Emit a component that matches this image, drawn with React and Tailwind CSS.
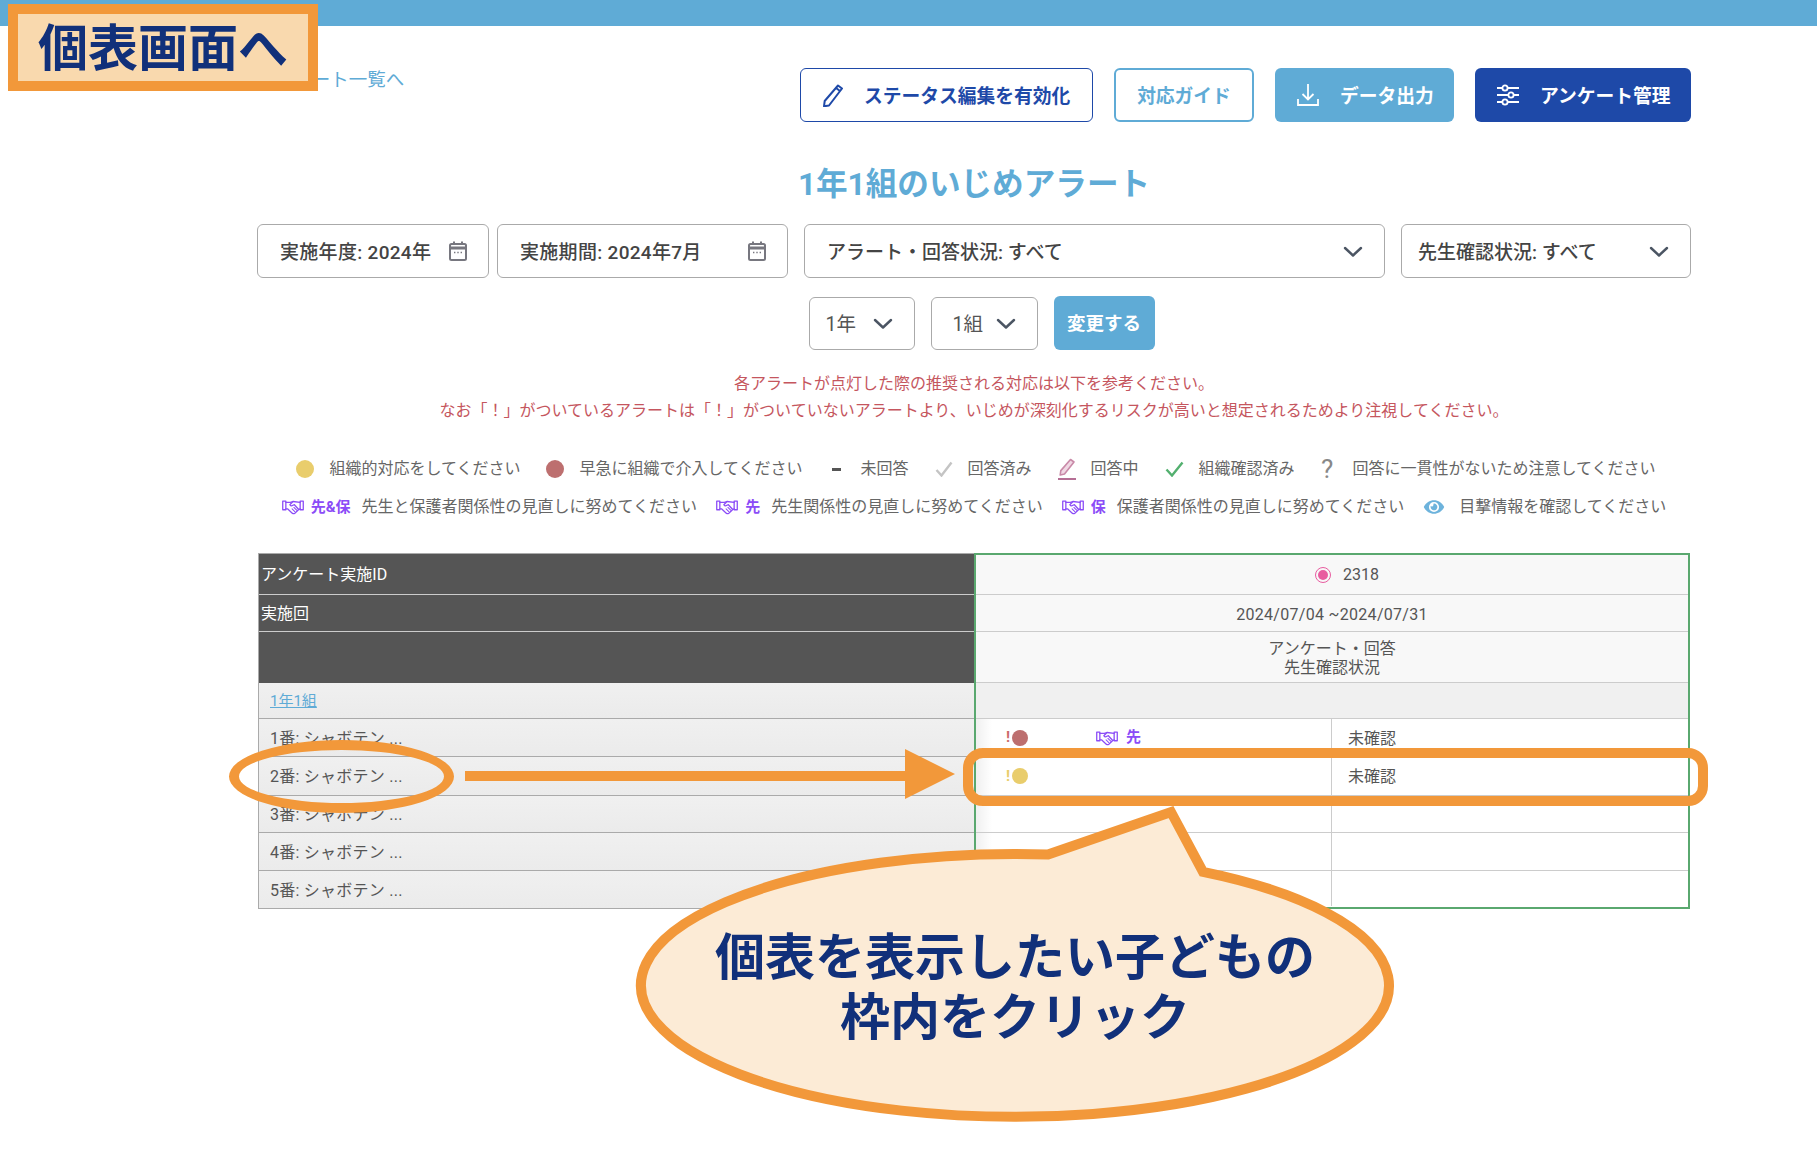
import React from "react";
import { FaEye } from "react-icons/fa";

const students = ["1番: シャボテン ...", "2番: シャボテン ...", "3番: シャボテン ...", "4番: シャボテン ...", "5番: シャボテン ..."];
const rowHeights = ["h-[38px]", "h-[39px]", "h-[37px]", "h-[38px]", "h-[37px]"];

function Chevron() {
  return (
    <svg viewBox="0 0 20 11" className="w-[20px] h-[11px] shrink-0" fill="none" stroke="#4b5563" strokeWidth="2.4" strokeLinecap="round" strokeLinejoin="round">
      <path d="M2 2l8 7.5L18 2" />
    </svg>
  );
}

function Calendar() {
  return (
    <svg viewBox="0 0 18 20" className="w-[18px] h-[20px] shrink-0" fill="none" stroke="#77777f" strokeWidth="2">
      <rect x="1" y="3" width="16" height="16" rx="1.5" />
      <path d="M1 7h16" strokeWidth="3" />
      <path d="M5 0.5v3M13 0.5v3" />
      <path d="M5 11.5h1.4M8.3 11.5h1.4M11.6 11.5h1.4" strokeWidth="1.5" />
    </svg>
  );
}

function Dot({ color, size = "w-[18px] h-[18px]" }) {
  return <span className={`${size} rounded-full shrink-0 ${color}`} />;
}

function Hands() {
  return (
    <svg viewBox="0 0 24 17" className="w-[22px] h-[16px] shrink-0" fill="none" stroke="#8b4cf7" strokeWidth="1.4" strokeLinejoin="round" strokeLinecap="round">
      <path d="M0.8 2h3.4v9.5H0.8zM19.8 2h3.4v9.5h-3.4z" />
      <path d="M4.2 3.5L9 3.5L12 2.5L19.8 3.5" />
      <path d="M4.2 10.5H6L11.5 15.5Q12.8 16.2 14 15.3L18 11.5L19.8 10.5" />
      <path d="M12 2.5L8.6 6Q9.6 8 12 6.6L13.5 6L18 11" />
      <path d="M11 10.5L14 13.5M13 9L16 12" strokeWidth="1.1" />
    </svg>
  );
}

function Legend({ icon, children, gap = "gap-[15px]" }) {
  return (
    <div className={`flex items-center ${gap}`}>
      {icon}
      <span className="whitespace-nowrap">{children}</span>
    </div>
  );
}

function Field({ width, children, right }) {
  return (
    <div className={`${width} h-[54px] border border-[#aaaaaa] rounded-md flex items-center justify-between pr-[21px] font-medium text-[19px] text-[#444444]`}>
      <span className="pt-[4px]">{children}</span>
      {right}
    </div>
  );
}

function ClassSelect({ label, box }) {
  return (
    <div className={`${box} h-[53px] border border-[#aaaaaa] rounded-md flex items-center justify-between pr-[21px] text-[19.5px] text-[#555555]`}>
      <span className="pt-[4px]">{label}</span>
      <Chevron />
    </div>
  );
}

export default function App() {
  return (
    <div className="relative w-full h-[1176px] overflow-hidden bg-white font-['Roboto','Noto_Sans_CJK_JP',sans-serif] text-[#555555]">
      <div className="h-[26px] bg-[#5fabd6]" />

      <div className="ml-[257px] w-[1434px]">
        <div className="flex justify-between items-start mt-[42px]">
          <a className="text-[18.5px] leading-[24px] text-[#5fabd6]">アンケート一覧へ</a>
          <div className="flex gap-[21px] text-[18.75px] font-bold">
            <button className="w-[293px] h-[54px] border-[1.5px] border-[#1e49a8] rounded-md flex items-center pl-[21px] gap-[20px] text-[#1e49a8]">
              <svg viewBox="0 0 22 24" className="w-[22px] h-[24px]" fill="none" stroke="#1e49a8" strokeWidth="2" strokeLinejoin="round">
                <path d="M16 2.5l4 3L7 22.5l-5 0.8 0.7-5.3z" />
                <path d="M14 5l4 3" />
              </svg>
              <span className="pt-[4px]">ステータス編集を有効化</span>
            </button>
            <button className="w-[140px] h-[54px] border-2 border-[#5fabd6] rounded-md text-[#5fabd6] pt-[4px]">対応ガイド</button>
            <button className="w-[179px] h-[54px] bg-[#5fabd6] rounded-md flex items-center pl-[22px] gap-[21px] text-white">
              <svg viewBox="0 0 22 24" className="w-[22px] h-[24px]" fill="none" stroke="#ffffff" strokeWidth="1.8">
                <path d="M11 1v15M5.5 11l5.5 5.5 5.5-5.5" />
                <path d="M1 16v6h20v-6" />
              </svg>
              <span className="pt-[4px]">データ出力</span>
            </button>
            <button className="w-[216px] h-[54px] bg-[#1e49a8] rounded-md flex items-center pl-[22px] gap-[21px] text-white">
              <svg viewBox="0 0 22 24" className="w-[22px] h-[24px]" fill="none" stroke="#ffffff" strokeWidth="1.8">
                <path d="M0 5h5M11 5h11M0 12h11M17 12h5M0 19h5M11 19h11" />
                <circle cx="8" cy="5" r="2.6" />
                <circle cx="14" cy="12" r="2.6" />
                <circle cx="8" cy="19" r="2.6" />
              </svg>
              <span className="pt-[4px]">アンケート管理</span>
            </button>
          </div>
        </div>

        <h1 className="mt-[40px] pt-[2px] h-[42px] text-center text-[31.6px] leading-[42px] font-bold text-[#5fabd6]">1年1組のいじめアラート</h1>

        <div className="flex mt-[20px]">
          <Field width="w-[232px] pl-[22px] tracking-[0.3px]" right={<Calendar />}>実施年度: 2024年</Field>
          <div className="w-[8px]" />
          <Field width="w-[291px] pl-[22px] tracking-[0.3px]" right={<Calendar />}>実施期間: 2024年7月</Field>
          <div className="w-[16px]" />
          <Field width="w-[581px] pl-[22px]" right={<Chevron />}>アラート・回答状況: すべて</Field>
          <div className="w-[16px]" />
          <Field width="w-[290px] pl-[16px]" right={<Chevron />}>先生確認状況: すべて</Field>
        </div>

        <div className="flex justify-center items-center gap-[16px] mt-[18px] pl-[15px]">
          <ClassSelect label="1年" box="w-[106px] pl-[16px]" />
          <ClassSelect label="1組" box="w-[107px] pl-[21px]" />
          <button className="w-[101px] h-[54px] bg-[#5fabd6] rounded-md text-white font-bold text-[18.5px] pt-[4px]">変更する</button>
        </div>

        <div className="mt-[20px] text-center text-[16px] leading-[27px] text-[#c5565e]">
          <p>各アラートが点灯した際の推奨される対応は以下を参考ください。</p>
          <p>なお「！」がついているアラートは「！」がついていないアラートより、いじめが深刻化するリスクが高いと想定されるためより注視してください。</p>
        </div>

        <div className="flex justify-center items-center gap-[26px] mt-[33px] h-[24px] pl-[4px] text-[16px] text-[#666666]">
          <Legend icon={<Dot color="bg-[#e9cd6c]" />}>組織的対応をしてください</Legend>
          <Legend icon={<Dot color="bg-[#bd6f6f]" />}>早急に組織で介入してください</Legend>
          <Legend gap="gap-[19px]" icon={<span className="ml-[4px] w-[9px] h-[3px] bg-[#555555]" />}>未回答</Legend>
          <Legend icon={
            <svg viewBox="0 0 18 16" className="w-[18px] h-[16px]" fill="none" stroke="#c4c4c4" strokeWidth="2.4"><path d="M1.5 9l5 5.5L16.5 1.5" /></svg>
          }>回答済み</Legend>
          <Legend icon={
            <svg viewBox="0 0 18 22" className="w-[18px] h-[22px]" fill="none" stroke="#c98aa8" strokeWidth="1.6" strokeLinejoin="round">
              <path d="M12.5 1.5l3.5 2.5-9.5 12-4.3 1 .6-4.4z" fill="#f0d8e4" />
              <path d="M0 21h18" strokeWidth="2" stroke="#b56f95" />
            </svg>
          }>回答中</Legend>
          <Legend icon={
            <svg viewBox="0 0 19 16" className="w-[19px] h-[16px]" fill="none" stroke="#53b06f" strokeWidth="2.4"><path d="M1.5 8.5l5.5 6L17.5 1.5" /></svg>
          }>組織確認済み</Legend>
          <Legend gap="gap-[19px]" icon={<span className="w-[13px] text-center text-[26px] leading-[24px] text-[#888888]">?</span>}>回答に一貫性がないため注意してください</Legend>
        </div>

        <div className="flex justify-center items-center gap-[19px] mt-[14px] h-[24px] text-[16px] text-[#666666]">
          <div className="flex items-center">
            <Hands />
            <span className="ml-[7px] mr-[11px] text-[15px] font-bold text-[#8b4cf7]">先&保</span>
            <span className="whitespace-nowrap">先生と保護者関係性の見直しに努めてください</span>
          </div>
          <div className="flex items-center">
            <Hands />
            <span className="ml-[7px] mr-[11px] text-[15px] font-bold text-[#8b4cf7]">先</span>
            <span className="whitespace-nowrap">先生関係性の見直しに努めてください</span>
          </div>
          <div className="flex items-center">
            <Hands />
            <span className="ml-[7px] mr-[11px] text-[15px] font-bold text-[#8b4cf7]">保</span>
            <span className="whitespace-nowrap">保護者関係性の見直しに努めてください</span>
          </div>
          <div className="flex items-center gap-[14px]">
            <FaEye className="w-[22px] h-[18px] text-[#6db3dc]" />
            <span className="whitespace-nowrap">目撃情報を確認してください</span>
          </div>
        </div>

        <div className="flex ml-[1px] w-[1432px] mt-[34px] text-[16px]">
          <div className="w-[716px] shrink-0 border-l border-b border-t border-[#aaaaaa]">
            <div className="h-[41px] bg-[#555555] text-white border-b border-[#cccccc] flex items-center pl-[2px] pt-[2px]">アンケート実施ID</div>
            <div className="h-[37px] bg-[#555555] text-white border-b border-[#cccccc] flex items-center pl-[2px] pt-[2px]">実施回</div>
            <div className="h-[51px] bg-[#555555]" />
            <div className="h-[36px] bg-[linear-gradient(to_bottom,#f0f0f0,#ebebeb)] border-b border-[#aaaaaa] flex items-center pl-[11px] pt-[2px]">
              <a className="underline text-[15px] text-[#5fabd6]">1年1組</a>
            </div>
            {students.map((s, i) => (
              <div key={i} className={`${rowHeights[i]} bg-[linear-gradient(to_bottom,#f0f0f0,#ebebeb)] border-b border-[#aaaaaa] last:border-b-0 flex items-center pl-[11px] pt-[2px] tracking-[0.25px]`}>
                {s}
              </div>
            ))}
          </div>

          <div className="flex-1 border-2 border-[#5aa86f] bg-white text-[#555555]">
            <div className="h-[40px] bg-[#f8f8f8] border-b border-[#cccccc] flex items-center justify-center gap-[12px] pl-[30px]">
              <span className="w-[16px] h-[16px] rounded-full border border-[#e85ca0] p-[2px] flex">
                <span className="flex-1 rounded-full bg-[#e85ca0]" />
              </span>
              2318
            </div>
            <div className="h-[37px] bg-[#f8f8f8] border-b border-[#cccccc] flex items-center justify-center tracking-[0.3px] pt-[3px]">2024/07/04 ~2024/07/31</div>
            <div className="h-[51px] bg-[#f8f8f8] border-b border-[#cccccc] flex flex-col items-center justify-center leading-[19px] pt-[2px]">
              <span>アンケート・回答</span>
              <span>先生確認状況</span>
            </div>
            <div className="h-[36px] bg-[#f0f0f0] border-b border-[#cccccc]" />
            {rowHeights.map((h, i) => (
              <div key={i} className={`${i === 4 ? "h-[35px]" : h} flex border-b border-[#cccccc] last:border-b-0 bg-[linear-gradient(to_right,#f0f0f0,#ffffff_16px)]`}>
                <div className="w-[356px] border-r border-[#cccccc] flex items-center pl-[30px]">
                  {i === 0 && (
                    <div className="flex items-center">
                      <span className="w-[6px] text-[15px] font-bold text-[#cc6b6b]">!</span>
                      <Dot color="bg-[#bd6f6f]" size="w-[16px] h-[16px]" />
                      <span className="ml-[68px]"><Hands /></span>
                      <span className="ml-[8px] text-[15px] font-bold text-[#8b4cf7]">先</span>
                    </div>
                  )}
                  {i === 1 && (
                    <div className="flex items-center">
                      <span className="w-[6px] text-[15px] font-bold text-[#e9cd6c]">!</span>
                      <Dot color="bg-[#e9cd6c]" size="w-[16px] h-[16px]" />
                    </div>
                  )}
                </div>
                <div className="flex-1 flex items-center pl-[16px] pt-[2px]">{i < 2 ? "未確認" : ""}</div>
              </div>
            ))}
          </div>
        </div>
      </div>

      {/* annotations on top of the screenshot */}
      <div className="absolute left-[8px] top-[4px] w-[310px] h-[87px] border-[10px] border-[#f2983a] bg-[#f9d9ae] flex items-center justify-center pt-[3px] text-[50px] font-bold text-[#11307a]">
        個表画面へ
      </div>

      <div className="absolute left-[229px] top-[740px] w-[225px] h-[73px] rounded-[50%] border-[10px] border-[#f2983a]" />
      <div className="absolute left-[963px] top-[748px] w-[745px] h-[58px] rounded-[20px] border-[10px] border-[#f2983a]" />

      <svg className="absolute left-[465px] top-[749px] w-[490px] h-[50px]" viewBox="0 0 490 50" fill="#f2983a">
        <path d="M0 22h440V0l50 25-50 25V32H0z" />
      </svg>

      <svg className="absolute left-[620px] top-[800px] w-[790px] h-[330px]" viewBox="620 800 790 330">
        <path d="M1048 854.51L1171 812L1203 871.81A374 131.4 0 1 1 1048 854.51Z" fill="#fcebd6" stroke="#f2983a" strokeWidth="10" />
      </svg>

      <div className="absolute left-[635px] top-[928px] w-[760px] text-center text-[50px] leading-[60px] font-bold text-[#11307a]">
        <p>個表を表示したい子どもの</p>
        <p>枠内をクリック</p>
      </div>
    </div>
  );
}
